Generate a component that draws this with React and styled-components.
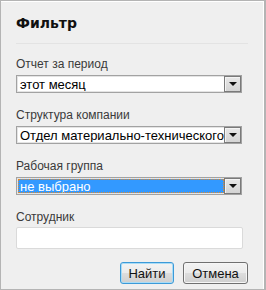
import React from "react";
import styled, { createGlobalStyle, css } from "styled-components";

const GlobalStyle = createGlobalStyle`
  html, body {
    margin: 0;
    padding: 0;
    background: #ffffff;
  }
`;

const Panel = styled.div`
  width: 266px;
  height: 290px;
  box-sizing: border-box;
  background: #efefef;
  border: 1px solid #b4b4b4;
  border-right: 2px solid #b4b4b4;
  box-shadow: inset -1px 1px 0 #ffffff;
  padding: 14px 0 0 15px;
  font-family: "Liberation Sans", Arial, sans-serif;
`;

const Title = styled.h2`
  margin: 0;
  font-family: "DejaVu Sans", Verdana, sans-serif;
  font-size: 14px;
  line-height: 17px;
  font-weight: 700;
  color: #111;
`;

const Divider = styled.div`
  width: 232px;
  height: 1px;
  background: #e3e3e3;
  margin: 11px 0 13px;
`;

const FieldBlock = styled.div`
  margin-bottom: ${p => (p.$last ? 13 : 15)}px;
`;

const Label = styled.div`
  font-size: 12px;
  line-height: 14px;
  color: #3a3a3a;
  margin-bottom: ${p => p.$gap || 4}px;
`;

const SelectBox = styled.div`
  display: flex;
  width: 226px;
  height: 18px;
  box-sizing: border-box;
  border: 1px solid #a2a2a2;
  background: #ffffff;
  box-shadow: inset 0 0 0 1px #e4e4e4;
`;

const SelectValue = styled.div`
  flex: 1;
  min-width: 0;
  overflow: hidden;
  white-space: nowrap;
  font-size: 13px;
  line-height: 14px;
  padding: 1px 1px 0 2px;
  margin: 1px 0 1px 1px;
  color: #000;
  ${p =>
    p.$active &&
    css`
      background: #3399ff;
      color: #ffffff;
      outline: 1px dotted #e08a2c;
      outline-offset: -1px;
    `};
`;

const ArrowButton = styled.div`
  width: 17px;
  flex-shrink: 0;
  box-sizing: border-box;
  border: 1px solid #7a7a7a;
  box-shadow: inset 1px 1px 0 #f4f4f4;
  background: linear-gradient(#e8e8e8, #d4d4d4);
  display: flex;
  align-items: center;
  justify-content: center;
  &::after {
    content: "";
    border-left: 4px solid transparent;
    border-right: 4px solid transparent;
    border-top: 4px solid #111;
  }
`;

const TextInput = styled.input`
  display: block;
  width: 227px;
  height: 22px;
  box-sizing: border-box;
  border: 1px solid #dadada;
  border-radius: 2px;
  background: #ffffff;
  margin: 0;
  font-family: inherit;
  font-size: 13px;
  outline: none;
`;

const Actions = styled.div`
  display: flex;
  gap: 9px;
  justify-content: flex-end;
  width: 232px;
`;

const Button = styled.button`
  height: 22px;
  width: ${p => p.$width}px;
  box-sizing: border-box;
  padding: 0;
  font-family: "Liberation Sans", Arial, sans-serif;
  font-size: 13px;
  color: #111;
  border-radius: 3px;
  border: 1px solid ${p => (p.$primary ? "#3c9ad8" : "#707070")};
  box-shadow: inset 0 0 0 1px ${p => (p.$primary ? "#a9dcf6" : "#f6f6f6")};
  background: linear-gradient(#f3f3f3 0%, #ebebeb 50%, #dddddd 51%, #cfcfcf 100%);
`;

const Select = ({ value, active }) => (
  <SelectBox>
    <SelectValue $active={active}>{value}</SelectValue>
    <ArrowButton />
  </SelectBox>
);

const Field = ({ label, gap, last, children }) => (
  <FieldBlock $last={last}>
    <Label $gap={gap}>{label}</Label>
    {children}
  </FieldBlock>
);

const App = () => (
  <>
    <GlobalStyle />
    <Panel>
      <Title>Фильтр</Title>
      <Divider />
      <Field label="Отчет за период">
        <Select value="этот месяц" />
      </Field>
      <Field label="Структура компании">
        <Select value="Отдел материально-технического" />
      </Field>
      <Field label="Рабочая группа">
        <Select value="не выбрано" active />
      </Field>
      <Field label="Сотрудник" gap={3} last>
        <TextInput />
      </Field>
      <Actions>
        <Button $primary $width={54}>Найти</Button>
        <Button $width={65}>Отмена</Button>
      </Actions>
    </Panel>
  </>
);

export default App;
